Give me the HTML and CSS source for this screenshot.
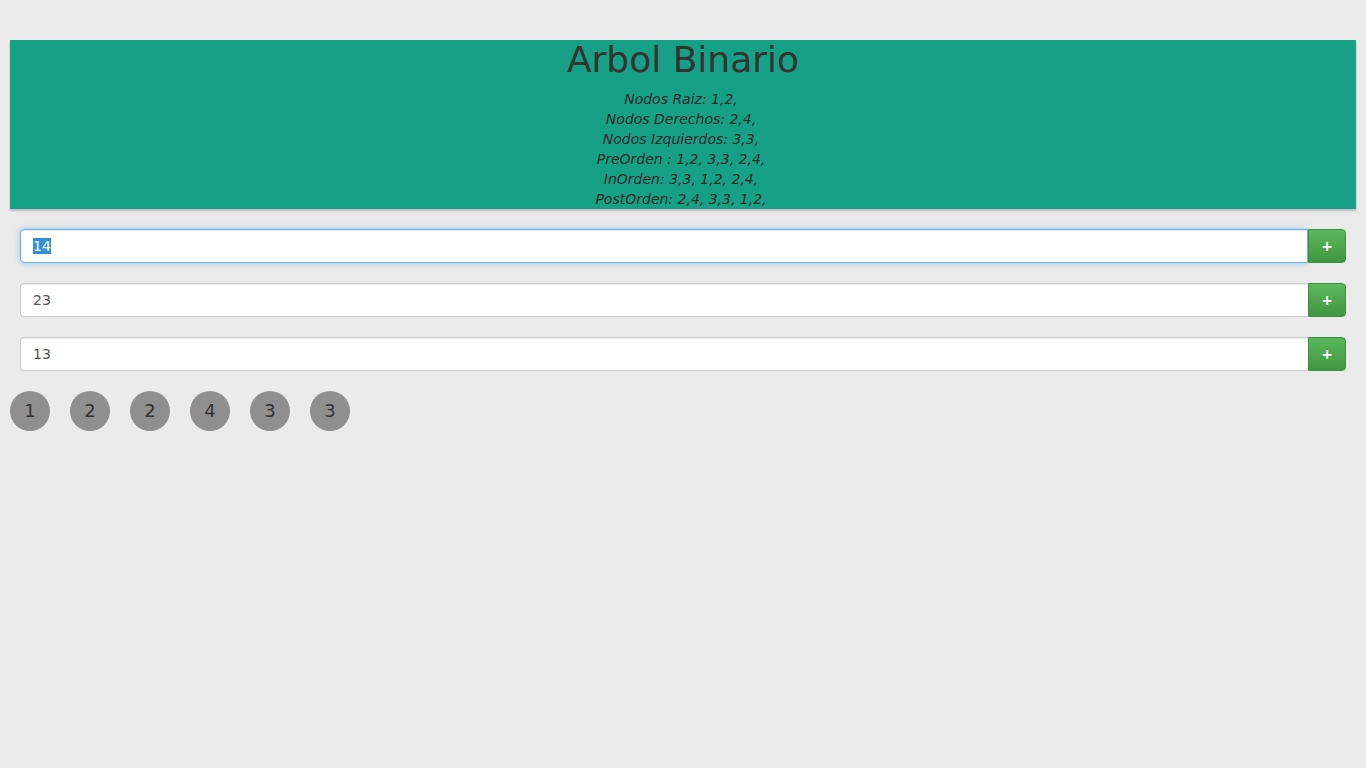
FILE: index.html
```html
<!DOCTYPE html>
<html lang="es">
<head>
<meta charset="utf-8">
<title>Arbol Binario</title>
<link rel="stylesheet" href="styles.css">
</head>
<body>
<header class="banner">
  <h1 class="title">Arbol Binario</h1>
  <div class="info">
    <div>Nodos Raiz: 1,2,</div>
    <div>Nodos Derechos: 2,4,</div>
    <div>Nodos Izquierdos: 3,3,</div>
    <div>PreOrden : 1,2, 3,3, 2,4,</div>
    <div>InOrden: 3,3, 1,2, 2,4,</div>
    <div>PostOrden: 2,4, 3,3, 1,2,</div>
  </div>
</header>
<main class="forms">
  <div class="input-group">
    <input id="first" class="form-control focused" type="text" value="14">
    <button class="btn-add">+</button>
  </div>
  <div class="input-group">
    <input class="form-control" type="text" value="23">
    <button class="btn-add">+</button>
  </div>
  <div class="input-group">
    <input class="form-control" type="text" value="13">
    <button class="btn-add">+</button>
  </div>
</main>
<div class="nodes">
  <div class="node">1</div>
  <div class="node">2</div>
  <div class="node">2</div>
  <div class="node">4</div>
  <div class="node">3</div>
  <div class="node">3</div>
</div>
<script>
  var f = document.getElementById('first');
  f.focus();
  f.select();
</script>
</body>
</html>
```

FILE: styles.css
```css
* { box-sizing: border-box; }
html, body {
  margin: 0;
  background: #ebebeb;
  font-family: "DejaVu Sans", Verdana, sans-serif;
  color: #333;
}
body {
  padding: 40px 10px 10px;
}
.banner {
  background: #16a085;
  text-align: center;
  box-shadow: 0 2px 2px rgba(0,0,0,0.2);
  height: 169px;
}
.title {
  margin: 0 0 9px;
  font-size: 36px;
  font-weight: normal;
  line-height: 40px;
  color: #333;
}
.info {
  font-style: italic;
  font-size: 14px;
  line-height: 20px;
  color: #2a2a2a;
  padding-right: 4px;
}
.forms {
  padding: 20px 10px 0;
  display: flex;
  flex-direction: column;
  gap: 20px;
}
.input-group {
  display: flex;
  height: 34px;
}
.form-control {
  flex: 1;
  height: 34px;
  padding: 6px 12px;
  font-family: "DejaVu Sans", Verdana, sans-serif;
  font-size: 14px;
  color: #555;
  background: #fff;
  border: 1px solid #ccc;
  border-right: none;
  border-radius: 4px 0 0 4px;
  box-shadow: inset 0 1px 1px rgba(0,0,0,0.075);
  outline: none;
}
.form-control.focused {
  border: 1px solid #66afe9;
  box-shadow: inset 0 1px 1px rgba(0,0,0,0.075), 0 0 6px rgba(102,175,233,0.6);
}
.form-control::selection {
  background: #3390d6;
  color: #fff;
}
.btn-add {
  width: 38px;
  height: 34px;
  border: 1px solid #3e8f3e;
  border-radius: 0 4px 4px 0;
  background: linear-gradient(to bottom, #5cb85c 0%, #419641 100%);
  color: #fff;
  font-family: "DejaVu Sans", Verdana, sans-serif;
  font-weight: bold;
  font-size: 14px;
  padding: 0;
  line-height: 32px;
}
.nodes {
  display: flex;
  gap: 20px;
  margin-top: 20px;
}
.node {
  width: 40px;
  height: 40px;
  border-radius: 50%;
  background: #8f8f8f;
  color: #333;
  font-size: 18px;
  line-height: 40px;
  text-align: center;
}
```
